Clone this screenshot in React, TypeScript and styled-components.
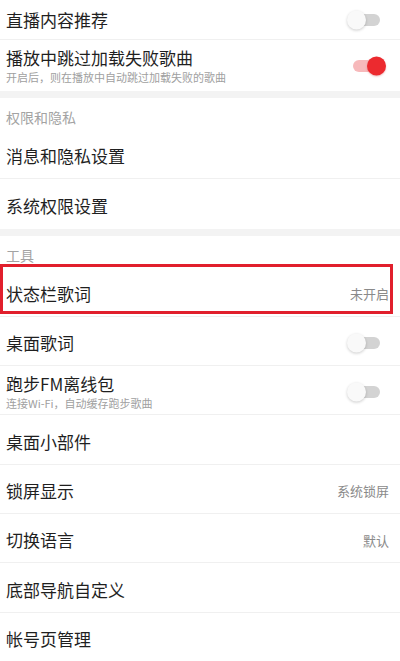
import React from "react";
import styled, { createGlobalStyle } from "styled-components";

const GlobalStyle = createGlobalStyle`
  html, body {
    margin: 0;
    padding: 0;
    background: #ffffff;
  }
  body {
    font-family: "Noto Sans CJK SC", "Noto Sans", sans-serif;
    -webkit-font-smoothing: antialiased;
  }
`;

type Item = {
  title: string;
  sub?: string;
  value?: string;
  toggle?: "on" | "off";
  highlight?: boolean;
};

type Section = {
  header?: string;
  items: Item[];
};

const sections: Section[] = [
  {
    items: [
      { title: "直播内容推荐", toggle: "off" },
      { title: "播放中跳过加载失败歌曲", sub: "开启后，则在播放中自动跳过加载失败的歌曲", toggle: "on" },
    ],
  },
  {
    header: "权限和隐私",
    items: [{ title: "消息和隐私设置" }, { title: "系统权限设置" }],
  },
  {
    header: "工具",
    items: [
      { title: "状态栏歌词", value: "未开启", highlight: true },
      { title: "桌面歌词", toggle: "off" },
      { title: "跑步FM离线包", sub: "连接Wi-Fi，自动缓存跑步歌曲", toggle: "off" },
      { title: "桌面小部件" },
      { title: "锁屏显示", value: "系统锁屏" },
      { title: "切换语言", value: "默认" },
      { title: "底部导航自定义" },
      { title: "帐号页管理" },
    ],
  },
];

const Page = styled.div`
  width: 400px;
  height: 661px;
  overflow: hidden;
  background: #ffffff;
`;

const Block = styled.section<{ $first?: boolean }>`
  background: #ffffff;
  border-top: ${({ $first }) => ($first ? "none" : "7px solid #f3f3f3")};
`;

const Header = styled.div`
  height: 32px;
  box-sizing: border-box;
  display: flex;
  align-items: flex-end;
  padding: 0 6px 6px;
  font-size: 14px;
  line-height: 14px;
  color: #a3a3a3;
`;

const Row = styled.div<{ $short?: boolean; $tall?: boolean }>`
  height: ${({ $short, $tall }) => ($short ? "40px" : $tall ? "51px" : "49.3px")};
  box-sizing: border-box;
  display: flex;
  align-items: center;
  justify-content: space-between;
  padding: ${({ $short, $tall }) => ($short || $tall ? "0" : "4px")} 20px 0 6px;
  border-bottom: 1px solid #f0f0f0;
  position: relative;

  &:last-child {
    border-bottom: none;
  }
`;

const Highlight = styled.div`
  position: absolute;
  top: -4px;
  left: 0;
  right: 7px;
  bottom: 2px;
  border: 3px solid #e11f2c;
  pointer-events: none;
`;

const Texts = styled.div`
  display: flex;
  flex-direction: column;
  gap: 2px;
`;

const Title = styled.div`
  font-size: 17px;
  line-height: 20px;
  color: #1f1f1f;
`;

const Sub = styled.div`
  font-size: 11px;
  line-height: 14px;
  color: #a0a0a0;
`;

const Value = styled.div`
  font-size: 13px;
  color: #8a8a8a;
  margin-right: -9px;
`;

const Track = styled.div<{ $on: boolean }>`
  position: relative;
  width: 27px;
  height: 12px;
  border-radius: 6px;
  background: ${({ $on }) => ($on ? "#f7b9bb" : "#d3d3d3")};
`;

const Knob = styled.div<{ $on: boolean }>`
  position: absolute;
  top: 50%;
  width: 19px;
  height: 19px;
  border-radius: 50%;
  transform: translateY(-50%);
  left: ${({ $on }) => ($on ? "14px" : "-6px")};
  background: ${({ $on }) => ($on ? "#ec2a2f" : "#f9f9f9")};
  box-shadow: ${({ $on }) =>
    $on ? "0 1px 2px rgba(180, 0, 0, 0.25)" : "0 1px 3px rgba(0, 0, 0, 0.2)"};
`;

const Toggle = ({ on }: { on: boolean }) => (
  <Track $on={on}>
    <Knob $on={on} />
  </Track>
);

export default function App() {
  return (
    <>
      <GlobalStyle />
      <Page>
        {sections.map((section, si) => (
          <Block key={si} $first={si === 0}>
            {section.header && <Header>{section.header}</Header>}
            {section.items.map((item, ii) => (
              <Row
                key={item.title}
                $short={si === 0 && ii === 0}
                $tall={si === 0 && ii === 1}
              >
                <Texts>
                  <Title>{item.title}</Title>
                  {item.sub && <Sub>{item.sub}</Sub>}
                </Texts>
                {item.value && <Value>{item.value}</Value>}
                {item.toggle && <Toggle on={item.toggle === "on"} />}
                {item.highlight && <Highlight />}
              </Row>
            ))}
          </Block>
        ))}
      </Page>
    </>
  );
}
